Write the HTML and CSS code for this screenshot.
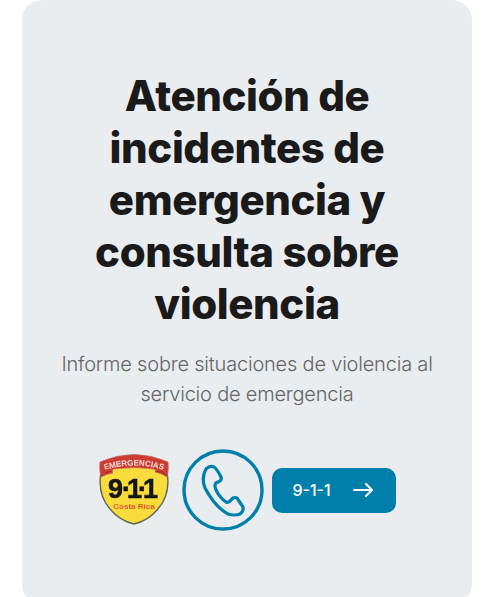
FILE: index.html
```html
<!DOCTYPE html>
<html lang="es">
<head>
<meta charset="utf-8">
<meta name="viewport" content="width=device-width, initial-scale=1">
<title>Atención de incidentes de emergencia</title>
<link rel="stylesheet" href="styles.css">
</head>
<body>
<main class="page">
  <section class="card">
    <h1 class="title">Atención de incidentes de emergencia y consulta sobre violencia</h1>
    <p class="lead">Informe sobre situaciones de violencia al servicio de emergencia</p>
    <div class="contact">
      <svg class="badge" viewBox="0 0 72 74" role="img" aria-label="Emergencias 9-1-1 Costa Rica">
        <defs><path id="arc" d="M3 18 Q36 7 69 18"/></defs>
        <path d="M3 19 C0 36 4 47 12 56 Q22 68 36 71 Q50 68 60 56 C68 47 72 36 69 19 Q36 6 3 19Z" fill="#f8dc3c" stroke="#62665c" stroke-width="1.4"/>
        <path d="M2 9 Q36 -6 70 9 Q71 17 69 24 Q63 20 57 19 Q60 17 56 16 Q36 13 16 16 Q12 17 15 20 Q8 21 3 24 Q1 17 2 9Z" fill="#cf3a31" stroke="#bc6762" stroke-width=".7"/>
        <path d="M3 23 Q9 18 15 18 M57 18 Q64 18 69 22" fill="none" stroke="#a92c28" stroke-width="1"/>
        <text class="badge-arc"><textPath href="#arc" startOffset="50%">EMERGENCIAS</textPath></text>
        <text class="badge-number" x="10 24 29 40 45" y="45">9·1·1</text>
        <text class="badge-place" x="36" y="56">Costa Rica</text>
      </svg>
      <svg class="phone" viewBox="0 0 82 82" aria-hidden="true">
        <circle cx="41" cy="41" r="39" stroke-width="3.4"/>
        <path d="M24 20 Q28 16 32 18 Q35 20 39 28 Q40 30 38 32 L34 34 Q32 36 34 41 Q38 49 44 53 Q46 54 48 52 L51 49 Q53 48 55 49 Q59 55 61 58 Q62 62 58 65 Q53 67 46 65 Q33 58 23 39 Q19 29 24 20Z" stroke-width="3.2"/>
      </svg>
      <a class="call" href="tel:911">
        <span>9-1-1</span>
        <svg class="arrow" viewBox="0 0 22 16" aria-hidden="true"><path d="M2 8H20M14 2L20 8L14 14"/></svg>
      </a>
    </div>
  </section>
</main>
</body>
</html>
```
FILE: styles.css
```css
html {
  overflow: hidden;
}

body {
  margin: 0;
  background: #fff;
  color: #1a1a1a;
  font-family: Inter, "Liberation Sans", sans-serif;
}

.page {
  padding: 0 29px 0 22px;
}

.card {
  padding: 70px 36px 73px;
  border-radius: 20px;
  background: #e9edf0;
  text-align: center;
}

.title {
  margin: 0 24px 19px;
  font-size: 42px;
  font-weight: 800;
  line-height: 52px;
  letter-spacing: -0.01em;
}

.lead {
  margin: 0 0 40px;
  color: #666;
  font-size: 20px;
  font-weight: 300;
  line-height: 30px;
  letter-spacing: -0.01em;
}

.contact {
  display: flex;
  align-items: center;
  justify-content: center;
}

.badge {
  width: 72px;
  height: 74px;
  margin-right: 12px;
  filter: blur(0.4px);
}

.badge text {
  font-family: "Liberation Sans", sans-serif;
  font-weight: 700;
  text-anchor: middle;
}

.badge-arc {
  fill: #f6dedb;
  font-size: 8px;
}

.badge .badge-number {
  fill: #151510;
  stroke: #151510;
  stroke-width: 0.6px;
  font-size: 27px;
  text-anchor: start;
}

.badge-place {
  fill: #e3572c;
  font-size: 8px;
}

.phone {
  width: 82px;
  height: 82px;
  margin-right: 8px;
  fill: none;
  stroke: #007fab;
  stroke-linejoin: round;
}

.call {
  display: flex;
  align-items: center;
  gap: 21px;
  padding: 0 22px 0 20px;
  border-radius: 10px;
  background: #007fab;
  color: #fff;
  font-size: 16px;
  font-weight: 500;
  line-height: 45px;
  text-decoration: none;
}

.arrow {
  width: 22px;
  height: 16px;
  fill: none;
  stroke: #fff;
  stroke-width: 2;
  stroke-linecap: round;
  stroke-linejoin: round;
}
```
